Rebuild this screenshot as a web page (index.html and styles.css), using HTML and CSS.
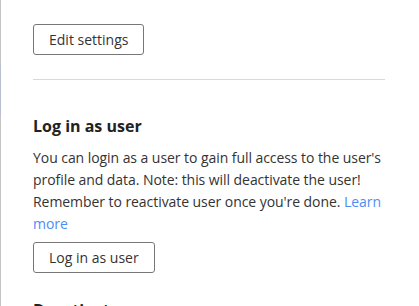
FILE: index.html
```html
<!DOCTYPE html>
<html lang="en">

<head>
    <meta charset="UTF-8">
    <meta name="viewport" content="width=device-width, initial-scale=1.0">
    <title>User settings</title>
    <link rel="stylesheet" href="styles.css">
</head>

<body>
    <div class="panel">
        <div class="section">
            <button class="btn">Edit settings</button>
        </div>

        <hr class="divider">

        <div class="section">
            <h2 class="heading">Log in as user</h2>
            <p class="text">You can login as a user to gain full access to the user's profile and data. Note: this will deactivate the user! Remember to reactivate user once you're done. <a href="#" class="link">Learn more</a></p>
            <button class="btn">Log in as user</button>
        </div>

        <div class="section">
            <h2 class="heading heading-next">Deactivate user</h2>
        </div>
    </div>
</body>

</html>
```

FILE: styles.css
```css
body {
    font-family: "Open Sans", Arial, sans-serif;
    margin: 0;
    padding: 0;
    background-color: #fff;
    color: #333;
    height: 306px;
    overflow: hidden;
}

/* left edge: grey sidebar line with a short highlighted stretch */
.panel {
    height: 100%;
    padding: 24px 0 0 33px;
    width: 352px;
    background:
        linear-gradient(#b9bed0, #b9bed0) 0 65px / 1px 50px no-repeat,
        linear-gradient(#c4c4c4, #c4c4c4) 0 0 / 1px 100% no-repeat;
}

.divider {
    border: none;
    border-top: 1px solid #d9d9d9;
    margin: 24px 0 0 0;
}

.heading {
    font-size: 16px;
    font-weight: 700;
    margin: 35px 0 10px 0;
    line-height: 22px;
    color: #222;
}

.heading-next {
    margin-top: 26px;
}

.text {
    font-size: 14px;
    line-height: 22px;
    letter-spacing: -0.06px;
    margin: 0 0 7px 0;
}

.link {
    color: #4c8df6;
    text-decoration: none;
}

.btn {
    font-family: "Open Sans", Arial, sans-serif;
    font-size: 14px;
    color: #333;
    background-color: #fff;
    border: 1px solid #777;
    border-radius: 3px;
    height: 31px;
    padding: 0 15px;
    cursor: pointer;
}
```
